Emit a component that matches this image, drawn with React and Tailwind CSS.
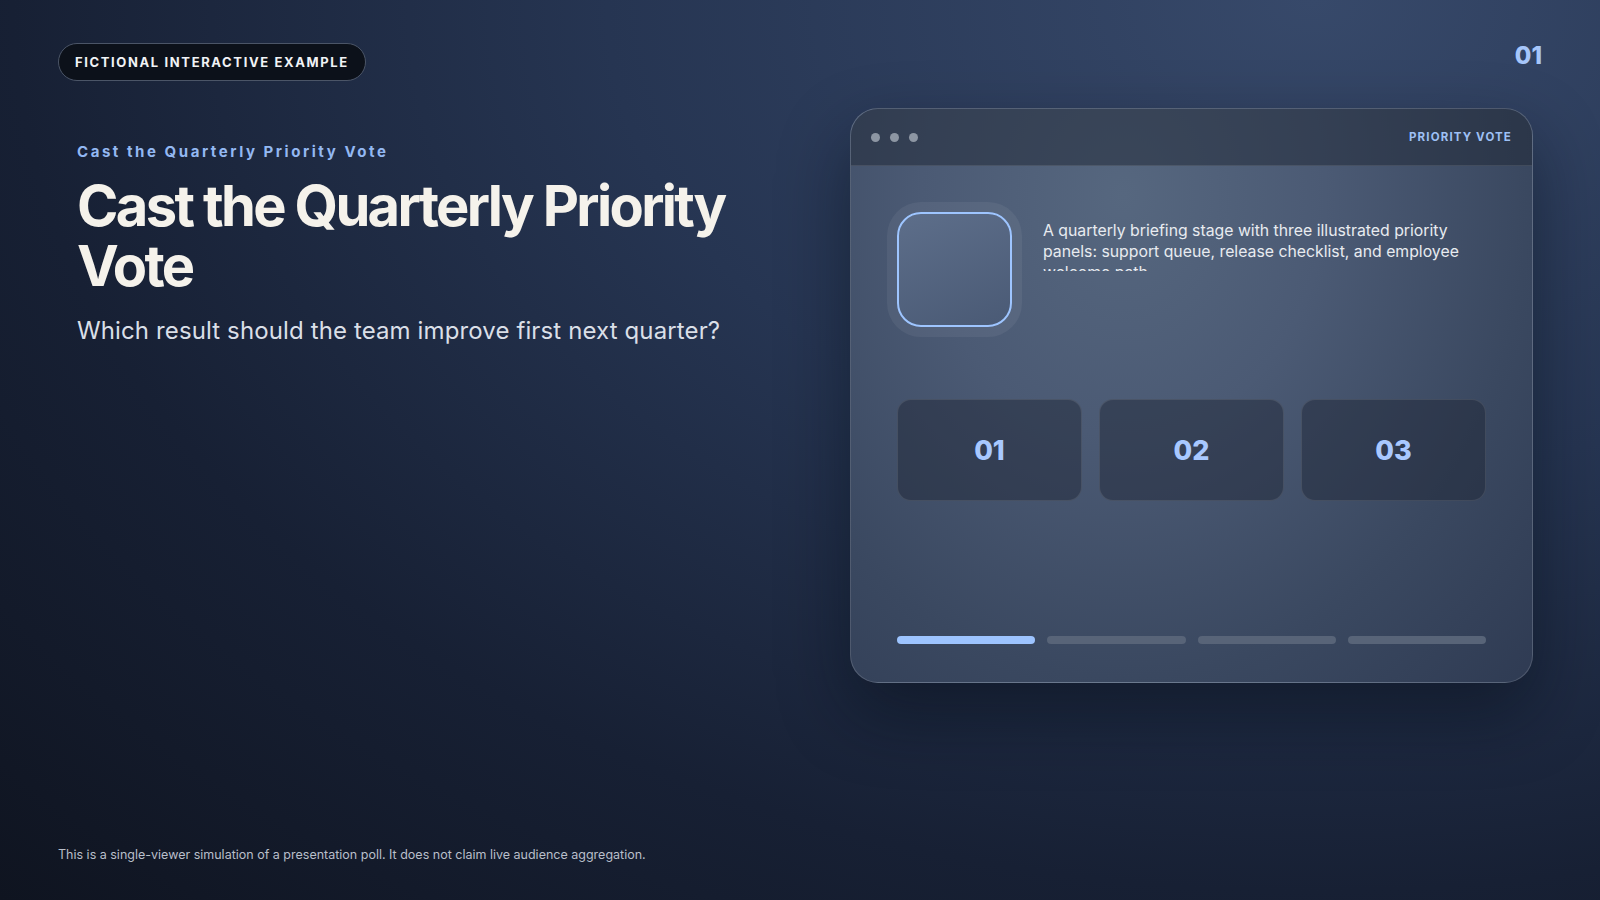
import React from 'react';

const options = ['01', '02', '03'];
const steps = [true, false, false, false];

const App = () => {
  return (
    <div className="w-[1600px] h-[900px] overflow-hidden font-['Inter','Noto_Sans',sans-serif] bg-[radial-gradient(ellipse_at_82%_0%,#37496a_0%,#263552_38%,#172034_70%,#0f1420_100%)]">
      <div className="flex flex-col h-full px-[58px] pt-[43px] pb-[36px]">
        {/* top row */}
        <div className="flex justify-between items-start">
          <div className="h-[38px] px-[16px] flex items-center rounded-full bg-[#0c111a] border border-[#4b5567]">
            <span className="text-[13px] font-bold tracking-[0.125em] text-[#f1f3f6] leading-none">
              FICTIONAL INTERACTIVE EXAMPLE
            </span>
          </div>
          <span className="text-[24px] font-extrabold leading-none text-[#a6c6fa] mt-[1px]">01</span>
        </div>

        {/* main */}
        <div className="flex justify-between mt-[27px] pr-[9px]">
          <div className="pl-[19px] pt-[34px]">
            <p className="text-[15px] leading-[20px] font-bold tracking-[0.17em] text-[#93b8f2]">
              Cast the Quarterly Priority Vote
            </p>
            <h1 className="mt-[14px] text-[56px] leading-[60px] font-bold tracking-[-0.047em] text-[#f5f2eb]">
              Cast the Quarterly Priority
              <br />
              Vote
            </h1>
            <p className="mt-[19px] text-[24px] leading-[32px] tracking-[0.005em] text-[#dadfe7]">
              Which result should the team improve first next quarter?
            </p>
          </div>

          <div className="w-[683px] h-[575px] flex flex-col rounded-[28px] overflow-hidden border border-white/15 bg-[radial-gradient(ellipse_at_40%_15%,#56677f_0%,#4b5a74_35%,#3a4860_70%,#2f3b53_100%)] shadow-[0_30px_70px_rgba(5,10,20,0.45)]">
            <div className="h-[57px] shrink-0 flex items-center justify-between px-[20px] bg-[rgba(30,38,52,0.5)] border-b border-white/10">
              <div className="flex gap-[10px]">
                <span className="w-[9px] h-[9px] rounded-full bg-[#8d96a3]" />
                <span className="w-[9px] h-[9px] rounded-full bg-[#8d96a3]" />
                <span className="w-[9px] h-[9px] rounded-full bg-[#8d96a3]" />
              </div>
              <span className="text-[11.5px] font-bold tracking-[0.1em] text-[#9ec0f5] mt-[2px]">PRIORITY VOTE</span>
            </div>

            <div className="flex-1 flex flex-col px-[46px] pt-[46px] pb-[38px]">
              <div className="flex items-start">
                <div className="w-[115px] h-[115px] shrink-0 rounded-[24px] border-2 border-[#9ec5ff] bg-[linear-gradient(160deg,#5d6e8a,#4a5a75)] shadow-[0_0_0_10px_rgba(255,255,255,0.06)]" />
                <p className="ml-[31px] mt-[8px] h-[51px] overflow-hidden flex-1 text-[15.8px] leading-[21px] text-[#e8ebf0]">
                  A quarterly briefing stage with three illustrated priority panels: support queue, release checklist, and employee welcome path.
                </p>
              </div>

              <div className="grid grid-cols-3 gap-[17px] mt-[72px]">
                {options.map((o) => (
                  <div
                    key={o}
                    className="h-[102px] flex items-center justify-center rounded-[14px] bg-[rgba(28,36,52,0.45)] border border-white/10"
                  >
                    <span className="text-[27px] font-extrabold text-[#a8c8ff] mt-[2px]">{o}</span>
                  </div>
                ))}
              </div>

              <div className="grid grid-cols-4 gap-[12px] mt-auto">
                {steps.map((on, i) => (
                  <div key={i} className={on ? 'h-[8px] rounded-full bg-[#9dc4ff]' : 'h-[8px] rounded-full bg-[#586478]'} />
                ))}
              </div>
            </div>
          </div>
        </div>

        {/* footer */}
        <p className="mt-auto text-[12.5px] leading-[18px] text-[#b9bfca]">
          This is a single-viewer simulation of a presentation poll. It does not claim live audience aggregation.
        </p>
      </div>
    </div>
  );
};

export default App;
